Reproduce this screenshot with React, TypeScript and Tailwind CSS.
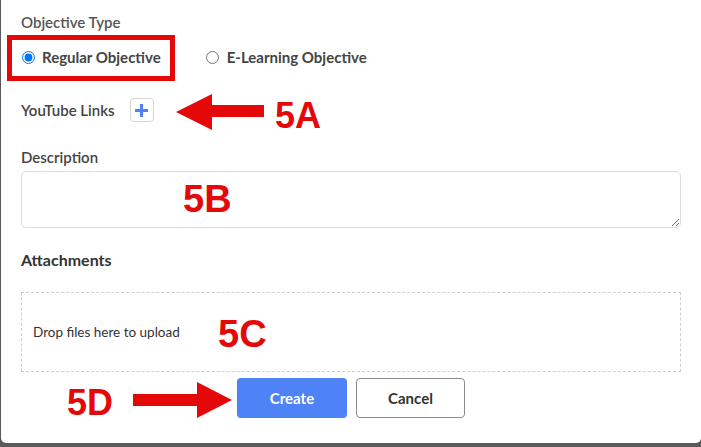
import React from "react";

const annotation = "absolute font-['Liberation_Sans',Arial,sans-serif] font-bold leading-none text-[#e40808]";

export default function App() {
  return (
    <div className="h-[447px] w-[701px] bg-[#5a5a5a] pl-px font-['Lato',sans-serif]">
      <div className="relative flex h-[443px] flex-col rounded-b-[5px] bg-white px-[20px] pt-[12px]">
        <div className="text-[15px] font-semibold leading-[20px] text-[#555]">Objective Type</div>

        {/* Objective type radios */}
        <div className="mt-[15px] flex h-[20px] items-center text-[15px] font-bold text-[#444]">
          <label className="flex items-center">
            <input type="radio" name="type" defaultChecked className="m-0 ml-px h-[13px] w-[13px]" />
            <span className="ml-[7px]">Regular Objective</span>
          </label>
          <label className="ml-[45px] flex items-center">
            <input type="radio" name="type" className="m-0 h-[13px] w-[13px]" />
            <span className="ml-[8px]">E-Learning Objective</span>
          </label>
        </div>

        <div className="mt-[31px] flex h-[24px] items-center">
          <span className="text-[15px] font-semibold text-[#444]">YouTube Links</span>
          <button className="ml-[15px] flex h-[24px] w-[24px] items-center justify-center rounded-[4px] border border-[#d4d4d4] bg-white">
            <svg width="13" height="13" viewBox="0 0 13 13">
              <rect x="5" y="0" width="3" height="13" fill="#4f80f6" />
              <rect x="0" y="5" width="13" height="3" fill="#4f80f6" />
            </svg>
          </button>
        </div>

        <div className="mt-[25px] text-[15px] font-semibold leading-[20px] text-[#444]">Description</div>
        <textarea className="mt-[4px] h-[57px] w-[660px] rounded-[5px] border border-[#dcdcdc] outline-none" />

        <div className="mt-[22px] text-[16px] font-bold leading-[20px] text-[#333]">Attachments</div>
        <div className="mt-[22px] flex h-[80px] w-[660px] items-center border border-dashed border-[#cfcfcf] pl-[11px] text-[13.5px] text-[#333]">
          Drop files here to upload
        </div>

        <div className="mt-[6px] flex justify-center gap-[9px]">
          <button className="h-[40px] w-[110px] rounded-[4px] bg-[#4e82f7] text-[15px] font-bold text-white">Create</button>
          <button className="h-[40px] w-[109px] rounded-[4px] border border-[#8a8a8a] bg-white text-[15px] font-bold text-[#333]">
            Cancel
          </button>
        </div>

        {/* Annotations */}
        <div className="absolute left-[6px] top-[35px] h-[46px] w-[168px] border-[5px] border-[#e40808]" />

        <svg className="absolute left-[175px] top-[93px]" width="89" height="38" viewBox="0 0 89 38">
          <polygon points="0,19 36,1 36,12 88,12 88,24 36,24 36,37" fill="#e40808" />
        </svg>
        <div className={`${annotation} left-[274px] top-[98px] text-[36px]`}>5A</div>
        <div className={`${annotation} left-[182px] top-[180px] text-[38px]`}>5B</div>
        <div className={`${annotation} left-[217px] top-[315px] text-[38px]`}>5C</div>
        <div className={`${annotation} left-[66px] top-[385px] text-[36px]`}>5D</div>
        <svg className="absolute left-[132px] top-[381px]" width="100" height="38" viewBox="0 0 100 38">
          <polygon points="0,13 64,13 64,1 99,19 64,37 64,25 0,25" fill="#e40808" />
        </svg>
      </div>
    </div>
  );
}
